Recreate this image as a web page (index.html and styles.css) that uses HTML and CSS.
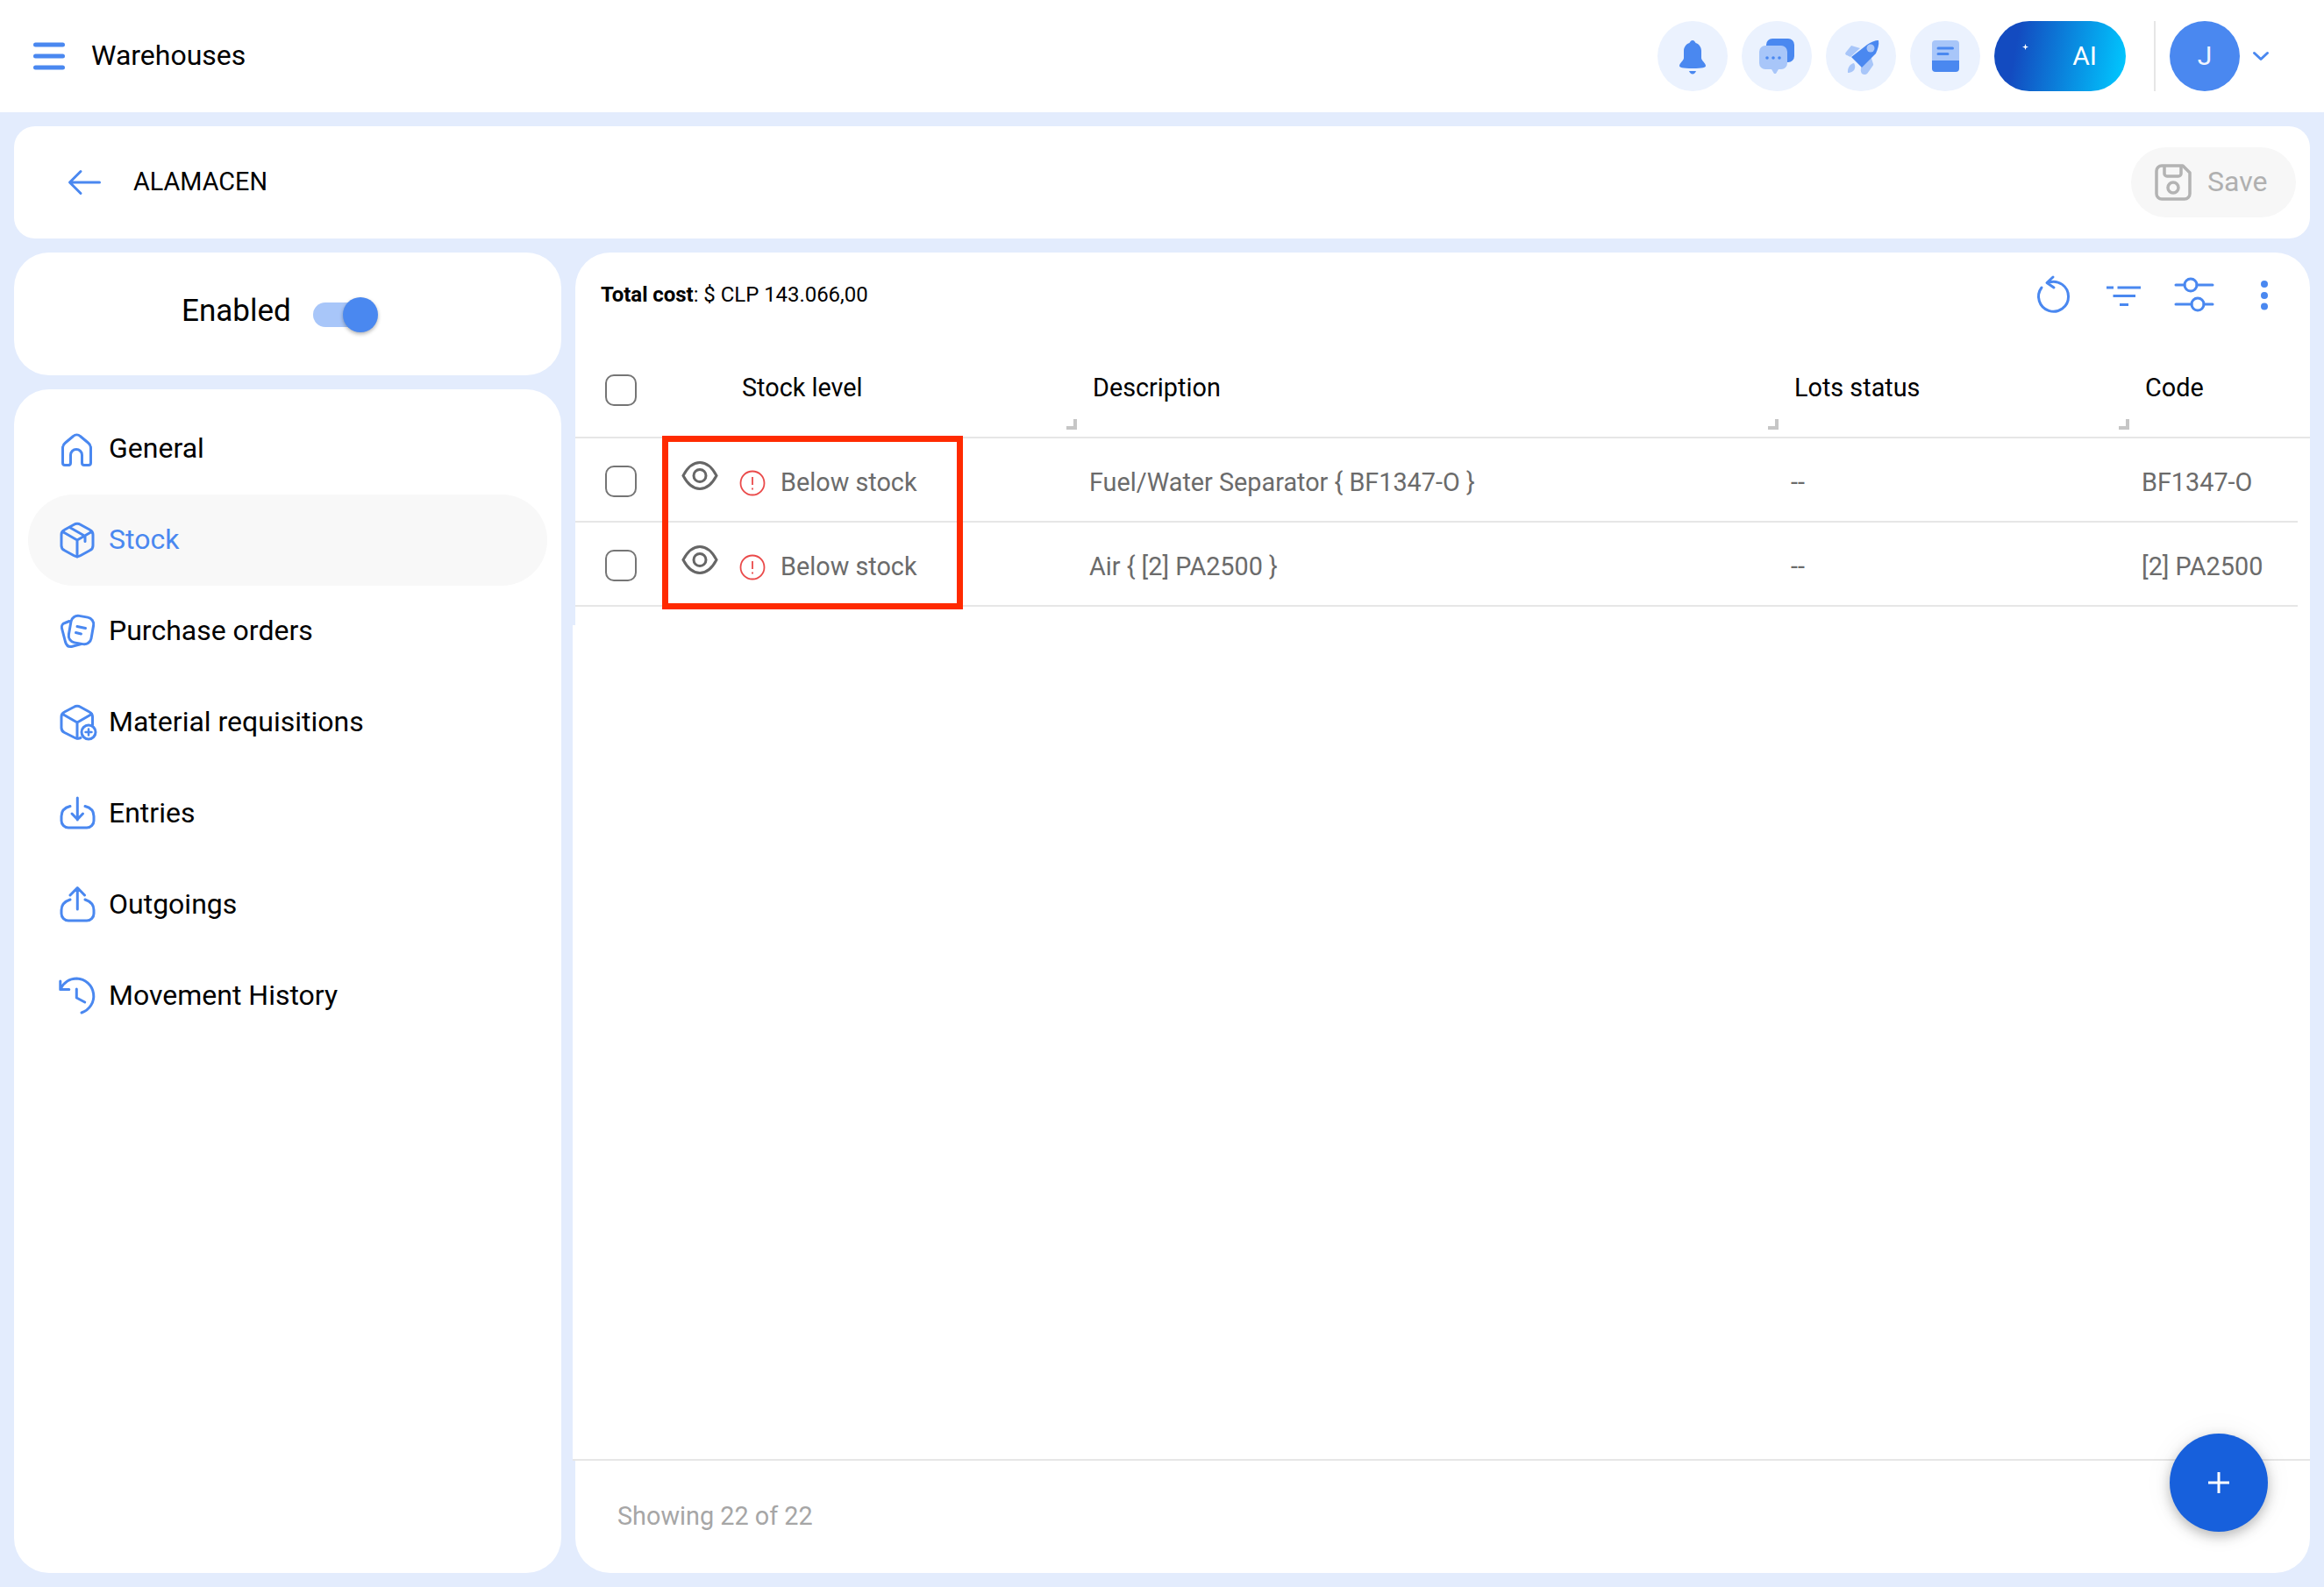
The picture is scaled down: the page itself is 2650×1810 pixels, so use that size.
FILE: index.html
```html
<!DOCTYPE html>
<html lang="en">
<head>
<meta charset="utf-8">
<title>Warehouses</title>
<link rel="stylesheet" href="styles.css">
</head>
<body>
<div class="page">
  <header class="topbar">
    <div class="topbar-left">
      <svg class="hamburger" viewBox="0 0 36 32"><path class="ln ln-5" d="M2.5 3h31M2.5 16h31M2.5 29h31"/></svg>
      <span class="app-title">Warehouses</span>
    </div>
    <div class="topbar-right">
      <span class="round-btn"><svg viewBox="0 0 80 80"><path class="fill-blue" d="M40 22c2 0 3 2 3.500 3c4 1 6.500 5 6.500 9v8c0 3 5 6 5 9c0 2-3 3-15 3s-15-1-15-3c0-3 5-6 5-9v-8c0-4 2.500-8 6.500-9c.5-1 1.500-3 3.500-3z"/><path class="fill-blue" d="M36 57h8c-1 2-2 3.500-4 3.500s-3-1.500-4-3.500z"/></svg></span>
      <span class="round-btn"><svg viewBox="0 0 80 80"><rect class="fill-blue" x="28" y="20" width="32" height="27" rx="7"/><path class="fill-light" d="M27 28h18a7 7 0 0 1 7 7v13a7 7 0 0 1-7 7h-3l-3 5h-2l-3-5h-7a7 7 0 0 1-7-7V35a7 7 0 0 1 7-7z"/><circle class="fill-blue" cx="29" cy="42" r="1.800"/><circle class="fill-blue" cx="36" cy="42" r="1.800"/><circle class="fill-blue" cx="43" cy="42" r="1.800"/></svg></span>
      <span class="round-btn"><svg viewBox="0 0 80 80"><path class="fill-light" d="M29 28l5 1.500 5 1.500-11 10-5-2.500c-1-.5-1-1.500-.5-2.500z"/><path class="fill-light" d="M41 60c-1.500-2-1.500-5-.5-8l11-11 2.500 8c.3 1 0 1.500-.5 2l-6 8.500c-2 2-4.500 2-6.500.5z"/><path class="fill-light" d="M25 59c-.5-5 2-10 7-11 2 3 1.500 7-1 9-2 1.500-4 2-6 2z"/><path class="fill-blue" d="M29 41L47 27c4-3 9-5 13-5 1 5-1 10-3 15L41 53z"/><circle class="fill-light" cx="51" cy="31" r="4.500"/></svg></span>
      <span class="round-btn"><svg viewBox="0 0 80 80"><path class="fill-light" d="M29 22h23a4 4 0 0 1 4 4v21H25V26a4 4 0 0 1 4-4z"/><path class="fill-blue" d="M25 45h31v9a4 4 0 0 1-4 4H29a4 4 0 0 1-4-4z"/><path class="ln ln-3" d="M32 31h16.500M32 37.500h11"/></svg></span>
      <span class="ai-btn"><svg class="sparkle" viewBox="0 0 8 8"><path class="fill-white" d="M4 0l1 3 3 1-3 1-1 3-1-3-3-1 3-1z"/></svg><span class="ai-text">AI</span></span>
      <span class="divider"></span>
      <span class="avatar">J</span>
      <svg class="chevron" viewBox="0 0 18 10"><path class="ln ln-3" d="M1.500 1.500L9 8.500l7.500-7"/></svg>
    </div>
  </header>

  <main class="content">
    <section class="card title-card">
      <div class="title-left">
        <svg class="back" viewBox="0 0 37 28"><path class="ln ln-3" d="M35.500 14H2M14 1.500L1.500 14 14 26.500"/></svg>
        <span class="record-title">ALAMACEN</span>
      </div>
      <button class="save-btn">
        <svg class="save-icon" viewBox="0 0 42 42"><path class="ln-save" d="M8 2h24l8 8v24a6 6 0 0 1-6 6H8a6 6 0 0 1-6-6V8a6 6 0 0 1 6-6z"/><path class="ln-save" d="M11 2v9a3 3 0 0 0 3 3h13a3 3 0 0 0 3-3V2"/><circle class="ln-save" cx="21" cy="27" r="6"/></svg>
        <span class="save-text">Save</span>
      </button>
    </section>

    <div class="columns">
      <aside class="side">
        <section class="card enabled-card">
          <span class="enabled-label">Enabled</span>
          <span class="toggle"><span class="toggle-thumb"></span></span>
        </section>
        <nav class="card nav-card">
          <a class="nav-item">
            <svg class="nav-icon" viewBox="0 0 40 40"><path class="ln ln-3" d="M11 38.500H6a2.500 2.500 0 0 1-2.500-2.500V19c0-2.500 1-4.500 3-6l9-7.500a6 6 0 0 1 8 0l9 7.500c2 1.500 3 3.500 3 6v17a2.500 2.500 0 0 1-2.500 2.500h-5a2.500 2.500 0 0 1-2.500-2.500v-9a6.500 6.500 0 0 0-13 0v9a2.500 2.500 0 0 1-2.500 2.500z"/></svg>
            <span class="nav-label">General</span>
          </a>
          <a class="nav-item active">
            <svg class="nav-icon" viewBox="0 0 40 40"><path class="ln ln-3" d="M16 2.500a8 8 0 0 1 8 0l10.500 5.800a6 6 0 0 1 3.500 5.500v12.400a6 6 0 0 1-3.500 5.500L24 37.500a8 8 0 0 1-8 0L5.500 31.700A6 6 0 0 1 2 26.200V13.800a6 6 0 0 1 3.500-5.500z"/><path class="ln ln-3" d="M3.500 10.500L20 20l16.500-9.500M20 20v19M11.500 5.500L29 15.500v6"/></svg>
            <span class="nav-label">Stock</span>
          </a>
          <a class="nav-item">
            <svg class="nav-icon" viewBox="0 0 40 40"><path class="ln ln-3" d="M11 8.500L6 10.500a5 5 0 0 0-3.500 6l4 15.500c1 3.500 3.500 6 7 5.500l11-3"/><rect class="ln ln-3" x="11.500" y="3" width="26" height="31" rx="8" transform="rotate(10 24.500 18.500)"/><path class="ln ln-3" d="M20 14.500l9.500 2M18.500 21.500l6 1.500"/></svg>
            <span class="nav-label">Purchase orders</span>
          </a>
          <a class="nav-item">
            <svg class="nav-icon" viewBox="0 0 40 40"><path class="ln ln-3" d="M24 37.500l-1.500.5a7 7 0 0 1-5-.5L5.500 31.500A6 6 0 0 1 2 26V13.500a6 6 0 0 1 3.500-5.500L16 2.500a8 8 0 0 1 8 0L34 8a6 6 0 0 1 3.500 5.500V23"/><path class="ln ln-3" d="M3.500 10.500L20 20l16.500-9.500M20 20v18"/><circle class="ln ln-3" cx="33" cy="31" r="8"/><path class="ln ln-25" d="M29.500 31h7M33 27.500v7"/></svg>
            <span class="nav-label">Material requisitions</span>
          </a>
          <a class="nav-item">
            <svg class="nav-icon" viewBox="0 0 40 40"><path class="ln ln-3" d="M20.300 2v25M14 20l6.300 6.500L26.500 20M12 11.500C6 13 2 17 2 23v5a8 8 0 0 0 8 8h21a8 8 0 0 0 8-8v-5c0-6-4-10-10-11.500"/></svg>
            <span class="nav-label">Entries</span>
          </a>
          <a class="nav-item">
            <svg class="nav-icon tall" viewBox="0 0 40 42"><path class="ln ln-3" d="M20.300 26V2M12 10l8.300-8.500L28.500 10M12 15C6 17 2 21 2 27v4a8 8 0 0 0 8 8h21a8 8 0 0 0 8-8v-4c0-6-4-10-10-12"/></svg>
            <span class="nav-label">Outgoings</span>
          </a>
          <a class="nav-item">
            <svg class="nav-icon tall" viewBox="0 0 40 42"><path class="ln ln-3" d="M.8 4v9.500h10M.8 13.500C4 6 11 1 19.500 1A20 20 0 0 1 25 40"/><path class="ln ln-3" d="M19.300 13v10l9.400 5"/></svg>
            <span class="nav-label">Movement History</span>
          </a>
        </nav>
      </aside>

      <section class="card table-card">
        <div class="toolbar">
          <p class="total"><b>Total cost</b>: $ CLP 143.066,00</p>
          <div class="tools">
            <svg class="tool tool-reset" viewBox="0 0 38 42"><path class="ln ln-3" d="M17 1l-7 6.500 8 5.500M12 7.200A17 17 0 1 1 4 13"/></svg>
            <svg class="tool tool-filter" viewBox="0 0 39 24"><path class="ln-butt" d="M0 3h8M12.500 3H39M7.500 12.500H33M15 22.500h10"/></svg>
            <svg class="tool tool-sliders" viewBox="0 0 44 38"><circle class="ln ln-3" cx="18" cy="8" r="7"/><circle class="ln ln-3" cx="26" cy="30" r="7"/><path class="ln ln-3" d="M1 8h10M25 8h18M1 30h18M33 30h10"/></svg>
            <svg class="tool tool-dots" viewBox="0 0 8 34"><circle class="fill-blue" cx="4" cy="4" r="4"/><circle class="fill-blue" cx="4" cy="17" r="4"/><circle class="fill-blue" cx="4" cy="29.500" r="4"/></svg>
          </div>
        </div>

        <div class="table">
          <div class="thead">
            <div class="th th-check"><span class="check"></span></div>
            <div class="th th-stock">Stock level<i class="grip"></i></div>
            <div class="th">Description<i class="grip"></i></div>
            <div class="th">Lots status<i class="grip"></i></div>
            <div class="th">Code</div>
          </div>
          <div class="tr">
            <div class="td td-check"><span class="check"></span></div>
            <div class="td td-stock">
              <svg class="eye" viewBox="0 0 42 35"><path class="ln-eye" d="M2 17.500C7 8 14 2.500 21 2.500S35 8 40 17.500C35 27 28 32.500 21 32.500S7 27 2 17.500z"/><circle class="ln-eye" cx="21" cy="17.500" r="7"/></svg>
              <svg class="alert" viewBox="0 0 30 30"><circle class="ln-alert" cx="15" cy="15" r="13.500"/><path class="ln-alert" d="M15 8v9M15 20.500v2"/></svg>
              <span class="stock-text">Below stock</span>
            </div>
            <div class="td">Fuel/Water Separator { BF1347-O }</div>
            <div class="td">--</div>
            <div class="td">BF1347-O</div>
          </div>
          <div class="tr">
            <div class="td td-check"><span class="check"></span></div>
            <div class="td td-stock">
              <svg class="eye" viewBox="0 0 42 35"><path class="ln-eye" d="M2 17.500C7 8 14 2.500 21 2.500S35 8 40 17.500C35 27 28 32.500 21 32.500S7 27 2 17.500z"/><circle class="ln-eye" cx="21" cy="17.500" r="7"/></svg>
              <svg class="alert" viewBox="0 0 30 30"><circle class="ln-alert" cx="15" cy="15" r="13.500"/><path class="ln-alert" d="M15 8v9M15 20.500v2"/></svg>
              <span class="stock-text">Below stock</span>
            </div>
            <div class="td">Air { [2] PA2500 }</div>
            <div class="td">--</div>
            <div class="td">[2] PA2500</div>
          </div>
          <div class="highlight"></div>
        </div>

        <div class="table-fill"></div>

        <footer class="table-footer">
          <span class="showing">Showing 22 of 22</span>
          <button class="fab"><svg class="fab-plus" viewBox="0 0 24 24"><path class="ln-white" d="M12 0v24M0 12h24"/></svg></button>
        </footer>
      </section>
    </div>
  </main>
</div>
</body>
</html>
```
FILE: styles.css
```css
* { box-sizing: border-box; }
html, body { margin: 0; padding: 0; }
body {
  width: 2650px;
  height: 1810px;
  overflow: hidden;
  background: #e3ecfd;
  font-family: Roboto, "Liberation Sans", sans-serif;
  color: #000;
}
svg { display: block; flex: none; overflow: visible; }
.ln { fill: none; stroke: #4a88f0; stroke-linecap: round; stroke-linejoin: round; }
.ln-5 { stroke-width: 5; }
.ln-3 { stroke-width: 3; }
.ln-25 { stroke-width: 2.5; }
.ln-butt { fill: none; stroke: #4a88f0; stroke-width: 3; }
.ln-save { fill: none; stroke: #b3b3b3; stroke-width: 3.5; stroke-linejoin: round; }
.ln-eye { fill: none; stroke: #666; stroke-width: 3; }
.ln-alert { fill: none; stroke: #ea4a4a; stroke-width: 1.800; }
.ln-white { fill: none; stroke: #fff; stroke-width: 3; }
.fill-blue { fill: #4a88f0; }
.fill-light { fill: #a8c6f9; }
.fill-white { fill: #fff; }

.page { display: flex; flex-direction: column; height: 1810px; }

/* top bar */
.topbar {
  height: 128px;
  flex: none;
  background: #fff;
  display: flex;
  align-items: center;
  justify-content: space-between;
  padding: 0 63px 0 38px;
}
.topbar-left { display: flex; align-items: center; gap: 30px; }
.hamburger { width: 36px; height: 32px; }
.app-title { font-size: 32px; line-height: 40px; margin-top: -3px; }
.topbar-right { display: flex; align-items: center; }
.round-btn {
  width: 80px;
  height: 80px;
  border-radius: 50%;
  background: #ebf2fe;
  margin-right: 16px;
}
.round-btn svg { width: 80px; height: 80px; }
.ai-btn {
  width: 150px;
  height: 80px;
  border-radius: 40px;
  background: linear-gradient(100deg, #134bc0 18%, #00c8ff 98%);
  position: relative;
  display: flex;
  align-items: center;
  justify-content: flex-end;
  padding-right: 33px;
}
.sparkle { position: absolute; left: 32px; top: 26px; width: 7px; height: 7px; }
.ai-text { color: #fff; font-size: 30px; margin-top: -2px; }
.divider { width: 2px; height: 80px; background: #e6e6e6; margin: 0 16px 0 32px; }
.avatar {
  width: 80px;
  height: 80px;
  border-radius: 50%;
  background: #4a88f0;
  color: #f0f5ff;
  font-size: 30px;
  display: flex;
  align-items: center;
  justify-content: center;
  padding-bottom: 2px;
}
.chevron { width: 18px; height: 10px; margin-left: 15px; }

/* content */
.content {
  flex: 1;
  min-height: 0;
  padding: 16px;
  display: flex;
  flex-direction: column;
  gap: 16px;
}
.card { background: #fff; }
.title-card {
  height: 128px;
  flex: none;
  border-radius: 24px;
  display: flex;
  align-items: center;
  justify-content: space-between;
  padding: 0 16px 0 62px;
}
.title-left { display: flex; align-items: center; gap: 37px; }
.back { width: 37px; height: 28px; }
.record-title { font-size: 28.8px; line-height: 36px; margin-top: -3px; }
.save-btn {
  width: 188px;
  height: 80px;
  border: 0;
  border-radius: 40px;
  background: #f7f7f7;
  display: flex;
  align-items: center;
  gap: 18px;
  padding: 0 0 0 27px;
  font-family: inherit;
}
.save-icon { width: 42px; height: 42px; }
.save-text { font-size: 32px; color: #b0b0b0; margin-top: -3px; }

.columns {
  flex: 1;
  min-height: 0;
  display: grid;
  grid-template-columns: 624px 1fr;
  gap: 16px;
}
.side { display: flex; flex-direction: column; gap: 16px; min-height: 0; }
.enabled-card {
  height: 140px;
  flex: none;
  border-radius: 40px;
  display: flex;
  align-items: center;
  gap: 25px;
  padding: 0 0 10px 191px;
}
.enabled-label { font-size: 35px; line-height: 44px; margin-top: 4px; }
.toggle {
  width: 64px;
  height: 28px;
  border-radius: 14px;
  background: #a8c6f9;
  position: relative;
  margin-top: 12px;
}
.toggle-thumb {
  position: absolute;
  right: -10px;
  top: -6px;
  width: 40px;
  height: 40px;
  border-radius: 50%;
  background: #4a88f0;
  box-shadow: 0 2px 4px rgba(0, 0, 0, 0.3);
}
.nav-card {
  flex: 1;
  border-radius: 40px;
  padding: 16px;
  display: flex;
  flex-direction: column;
}
.nav-item {
  height: 104px;
  flex: none;
  border-radius: 52px;
  display: flex;
  align-items: center;
  gap: 16px;
  padding-left: 36px;
  font-size: 32px;
  color: #000;
}
.nav-label { margin-top: -3px; }
.nav-item.active { background: #f8f8f8; color: #4a88f0; }
.nav-icon { width: 40px; height: 40px; }
.nav-icon.tall { height: 42px; }

/* table card */
.table-card {
  border-radius: 40px;
  display: flex;
  flex-direction: column;
  position: relative;
  min-height: 0;
}
.toolbar {
  height: 94px;
  flex: none;
  display: flex;
  align-items: center;
  justify-content: space-between;
  padding: 0 48px 0 29px;
}
.total { margin: 2px 0 0; font-size: 24px; line-height: 30px; letter-spacing: -0.05px; }
.total b { font-weight: 700; }
.tools { display: flex; align-items: center; margin-top: 2px; }
.tool-reset { width: 38px; height: 42px; margin-right: 40px; }
.tool-filter { width: 39px; height: 24px; margin: 2px 39px 0 0; }
.tool-sliders { width: 44px; height: 38px; margin-right: 54px; }
.tool-dots { width: 8px; height: 34px; margin-top: 2px; }

.table { position: relative; flex: none; }
.thead, .tr {
  display: grid;
  grid-template-columns: 100px 482px 800px 400px 1fr;
  border-bottom: 2px solid #e6e6e6;
  align-items: center;
}
.thead { height: 118px; padding-top: 4px; font-size: 28.8px; }
.th { position: relative; height: 100%; display: flex; align-items: center; padding-left: 8px; }
.th-check { padding-left: 34px; }
.th-stock { padding-left: 90px; }
.th-check .check { margin-top: 6px; }
.grip {
  position: absolute;
  right: 10px;
  bottom: 8px;
  width: 12px;
  height: 12px;
  border-right: 4px solid #c6c6c6;
  border-bottom: 4px solid #c6c6c6;
  clip-path: polygon(100% 0, 100% 100%, 0 100%, 0 66%, 66% 66%, 66% 0);
}
.tr {
  height: 96px;
  margin-right: 14px;
  padding-top: 6px;
  font-size: 28.8px;
  color: #6b6b6b;
}
.td { padding-left: 4px; white-space: nowrap; }
.td-check { padding-left: 34px; }
.td-stock { display: flex; align-items: center; padding-left: 21px; }
.check {
  display: block;
  width: 36px;
  height: 36px;
  border: 2px solid #757575;
  border-radius: 10px;
  background: #fff;
}
.td-check .check { margin-top: -2px; }
.eye { width: 42px; height: 35px; margin: -16px 24px 0 0; }
.alert { width: 30px; height: 30px; margin: 2px 17px 0 0; }
.highlight {
  position: absolute;
  left: 99px;
  top: 115px;
  width: 343px;
  height: 198px;
  border: 7px solid #ff2a00;
}
.table-fill { flex: 1; min-height: 0; margin: 21px 0 0 -3px; background: #fff; }
.table-footer {
  height: 130px;
  flex: none;
  border-top: 2px solid #e6e6e6;
  margin-left: -3px;
  display: flex;
  align-items: center;
  padding: 0 0 0 51px;
  position: relative;
}
.showing { font-size: 28.8px; color: #a6a6a6; margin-top: -2px; }
.fab {
  position: absolute;
  right: 48px;
  top: -31px;
  width: 112px;
  height: 112px;
  border: 0;
  padding: 0;
  border-radius: 50%;
  background: #1760dc;
  box-shadow: 0 5px 14px rgba(0, 0, 0, 0.25), 0 0 34px rgba(0, 0, 0, 0.06);
  display: flex;
  align-items: center;
  justify-content: center;
}
.fab-plus { width: 24px; height: 24px; }
```
